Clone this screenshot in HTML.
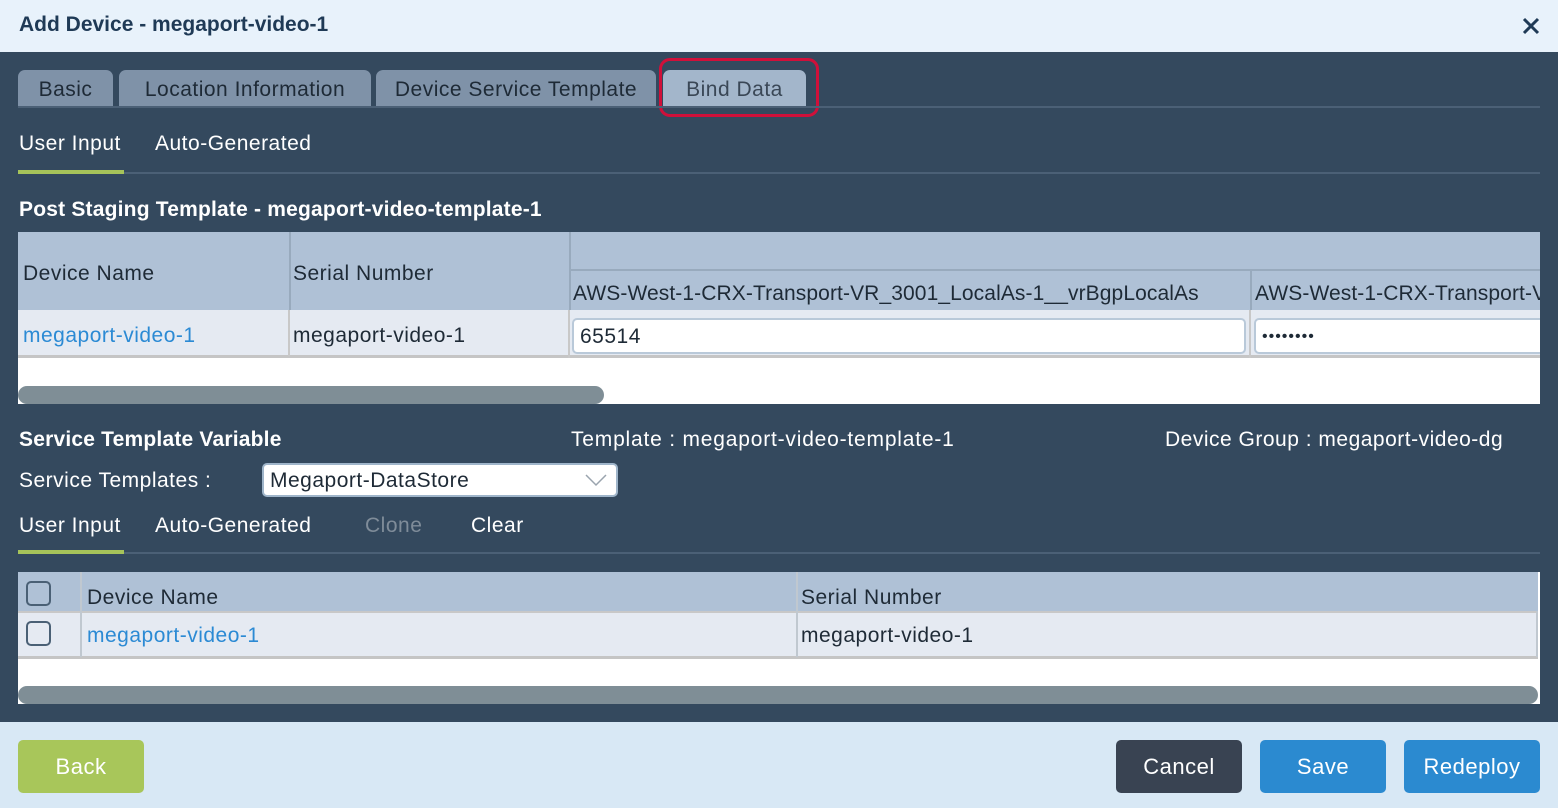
<!DOCTYPE html>
<html><head><meta charset="utf-8"><style>
*{box-sizing:border-box;margin:0;padding:0}
body{width:1558px;height:808px;overflow:hidden;font-family:"Liberation Sans",sans-serif;font-size:21px;background:#34495e;position:relative;letter-spacing:0.5px}
.a{position:absolute;white-space:nowrap}
.t{margin-top:2px}
.w{color:#fff}
.tab{position:absolute;top:70px;height:37px;background:#7f92a8;border-radius:7px 7px 0 0;color:#1e2a36;text-align:center;line-height:39px}
.btn{position:absolute;top:740px;height:53px;border-radius:5px;color:#fff;text-align:center;line-height:53px;font-size:22px}
.inp{position:absolute;background:#fff;border:2px solid #b9c9d9;border-radius:5px;padding-left:6px;line-height:33px;color:#1e2a36}
.cb{position:absolute;width:25px;height:25px;border:2px solid #4a6075;border-radius:5px}
</style></head><body>
<div class="a" style="left:0;top:0;width:1558px;height:52px;background:#e8f2fb"></div>
<div class="a" style="left:19px;top:13px;font-weight:bold;color:#1f3a56;font-size:21px;letter-spacing:0">Add Device - megaport-video-1</div>
<svg class="a" style="left:1522px;top:17px" width="18" height="18"><path d="M2 2L16 16M16 2L2 16" stroke="#1f3a56" stroke-width="3"/></svg>

<div class="tab" style="left:18px;width:95px">Basic</div>
<div class="tab" style="left:119px;width:252px">Location Information</div>
<div class="tab" style="left:376px;width:280px">Device Service Template</div>
<div class="tab" style="left:663px;width:143px;background:#a3b6cb;color:#3a4756">Bind Data</div>
<div class="a" style="left:659px;top:58px;width:160px;height:59px;border:3px solid #d0103a;border-radius:11px"></div>
<div class="a" style="left:18px;top:106px;width:1522px;height:2px;background:#4b6076"></div>

<div class="a w t" style="left:19px;top:130px">User Input</div>
<div class="a w t" style="left:155px;top:130px">Auto-Generated</div>
<div class="a" style="left:18px;top:172px;width:1522px;height:2px;background:#4b6076"></div>
<div class="a" style="left:18px;top:170px;width:106px;height:4px;background:#a6c35a"></div>

<div class="a w t" style="left:19px;top:196px;font-weight:bold;letter-spacing:0.2px">Post Staging Template - megaport-video-template-1</div>

<div class="a" style="left:18px;top:232px;width:1522px;height:172px;background:#fff"></div>
<div class="a" style="left:18px;top:232px;width:1522px;height:78px;background:#afc1d6"></div>
<div class="a" style="left:289px;top:232px;width:2px;height:78px;background:#98aabd"></div>
<div class="a" style="left:569px;top:232px;width:2px;height:78px;background:#98aabd"></div>
<div class="a" style="left:569px;top:269px;width:971px;height:2px;background:#98aabd"></div>
<div class="a" style="left:1250px;top:270px;width:2px;height:40px;background:#98aabd"></div>
<div class="a t" style="left:23px;top:260px;color:#1e2a36">Device Name</div>
<div class="a t" style="left:293px;top:260px;color:#1e2a36">Serial Number</div>
<div class="a t" style="left:573px;top:280px;color:#1e2a36;width:677px;overflow:hidden;letter-spacing:0.1px">AWS-West-1-CRX-Transport-VR_3001_LocalAs-1__vrBgpLocalAs</div>
<div class="a t" style="left:1255px;top:280px;color:#1e2a36;width:285px;overflow:hidden;letter-spacing:0.1px">AWS-West-1-CRX-Transport-VR</div>
<div class="a" style="left:18px;top:310px;width:1522px;height:48px;background:#e5eaf2;border-bottom:3px solid #c5c5c5"></div>
<div class="a" style="left:288px;top:310px;width:2px;height:46px;background:#c8c8c8"></div>
<div class="a" style="left:568px;top:310px;width:2px;height:48px;background:#c8c8c8"></div>
<div class="a" style="left:1249px;top:310px;width:2px;height:48px;background:#c8c8c8"></div>
<div class="a t" style="left:23px;top:322px;color:#2b8ad4">megaport-video-1</div>
<div class="a t" style="left:293px;top:322px;color:#1e2a36">megaport-video-1</div>
<div class="inp" style="left:572px;top:318px;width:674px;height:36px">65514</div>
<div class="inp" style="left:1254px;top:318px;width:300px;height:36px;font-size:16px;letter-spacing:1px">••••••••</div>
<div class="a" style="left:1540px;top:232px;width:18px;height:172px;background:#34495e"></div>
<div class="a" style="left:18px;top:386px;width:586px;height:18px;background:#7f8e96;border-radius:9px"></div>

<div class="a w t" style="left:19px;top:426px;font-weight:bold;letter-spacing:0.2px">Service Template Variable</div>
<div class="a w t" style="left:571px;top:426px;letter-spacing:0.8px">Template : megaport-video-template-1</div>
<div class="a w t" style="left:1165px;top:426px">Device Group : megaport-video-dg</div>
<div class="a w t" style="left:19px;top:467px">Service Templates :</div>
<div class="inp" style="left:262px;top:463px;width:356px;height:34px;border-color:#9fb5ca;line-height:31px">Megaport-DataStore</div>
<svg class="a" style="left:585px;top:473px" width="22" height="14"><path d="M1 2L11 12L21 2" stroke="#9aa4ae" stroke-width="1.5" fill="none"/></svg>

<div class="a w t" style="left:19px;top:512px">User Input</div>
<div class="a w t" style="left:155px;top:512px">Auto-Generated</div>
<div class="a t" style="left:365px;top:512px;color:#7f8c99">Clone</div>
<div class="a w t" style="left:471px;top:512px">Clear</div>
<div class="a" style="left:18px;top:552px;width:1522px;height:2px;background:#4b6076"></div>
<div class="a" style="left:18px;top:550px;width:106px;height:4px;background:#a6c35a"></div>

<div class="a" style="left:18px;top:572px;width:1522px;height:132px;background:#fff"></div>
<div class="a" style="left:18px;top:572px;width:1520px;height:39px;background:#afc1d6"></div>
<div class="a" style="left:18px;top:611px;width:1520px;height:48px;background:#e5eaf2;border-top:2px solid #c8c8c8;border-bottom:3px solid #c5c5c5"></div>
<div class="a" style="left:80px;top:572px;width:2px;height:85px;background:#c0c8d0"></div>
<div class="a" style="left:796px;top:572px;width:2px;height:85px;background:#c0c8d0"></div>
<div class="a" style="left:1536px;top:611px;width:2px;height:46px;background:#c0c8d0"></div>
<div class="cb" style="left:26px;top:581px"></div>
<div class="cb" style="left:26px;top:621px"></div>
<div class="a t" style="left:87px;top:584px;color:#1e2a36">Device Name</div>
<div class="a t" style="left:801px;top:584px;color:#1e2a36">Serial Number</div>
<div class="a t" style="left:87px;top:622px;color:#2b8ad4">megaport-video-1</div>
<div class="a t" style="left:801px;top:622px;color:#1e2a36">megaport-video-1</div>
<div class="a" style="left:18px;top:686px;width:1520px;height:18px;background:#7f8e96;border-radius:9px"></div>

<div class="a" style="left:0;top:722px;width:1558px;height:86px;background:#d8e8f5"></div>
<div class="btn" style="left:18px;width:126px;background:#a8c65a">Back</div>
<div class="btn" style="left:1116px;width:126px;background:#394352">Cancel</div>
<div class="btn" style="left:1260px;width:126px;background:#2b8ad0">Save</div>
<div class="btn" style="left:1404px;width:136px;background:#2b8ad0">Redeploy</div>
</body></html>
